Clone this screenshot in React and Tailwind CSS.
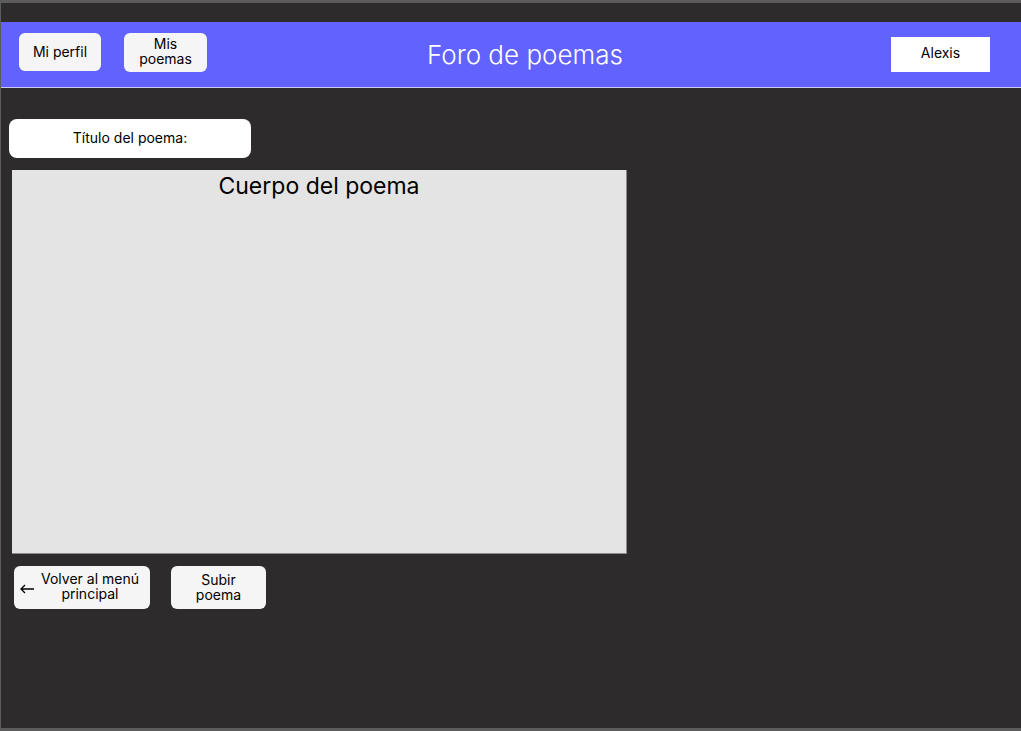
export default function App() {
  return (
    <div
      className="h-[731px] w-[1021px] overflow-hidden border-t-[3px] border-b-[3px] border-l border-[#5c5c5c] bg-[#2d2b2c]"
      style={{ fontFamily: 'Inter, "Liberation Sans", sans-serif' }}
    >
      <div className="h-[19px]" />
      <header className="flex h-[66px] items-start border-b border-[#c9c9ee] bg-[#6262fe] pt-[11px]">
        <button className="ml-[18px] h-[38px] w-[82px] rounded-md bg-[#f5f5f5] text-[14px] leading-[16px] text-black">
          Mi perfil
        </button>
        <button className="ml-[23px] h-[39px] w-[83px] rounded-md bg-[#f5f5f5] pb-[3px] text-[14px] leading-[15px] text-black">
          Mis
          <br />
          poemas
        </button>
        <h1 className="flex-1 pr-[48px] pt-[3px] text-center text-[26px] leading-[38px] font-light text-white">
          Foro de poemas
        </h1>
        <div className="mr-[31px] mt-[4px] flex h-[35px] w-[99px] items-center justify-center bg-white pb-[4px] text-[14px] text-black">
          Alexis
        </div>
      </header>
      <main className="px-[8px] pt-[31px]">
        <div className="flex h-[39px] w-[242px] items-center justify-center rounded-lg bg-white pb-[2px] text-[14px] text-black">
          Título del poema:
        </div>
        <div className="ml-[3px] mt-[12px] h-[384px] w-[615px] border-r border-b border-[#8a8a8a] bg-[#e4e4e4] pt-[2px] text-center text-[23px] leading-[28px] text-black">
          Cuerpo del poema
        </div>
        <div className="ml-[5px] mt-[12px] flex gap-[21px]">
          <button className="flex h-[43px] w-[136px] items-center justify-start gap-[6px] rounded-md bg-[#f5f5f5] pb-[3px] pl-[5px] text-[14px] leading-[15px] text-black">
            <svg width="16" height="12" viewBox="0 0 16 12" fill="none" stroke="black" strokeWidth="1.3" className="mt-[4px]">
              <path d="M15 7H2M6 3L2 7l4 4" />
            </svg>
            <span className="text-center">
              Volver al menú
              <br />
              principal
            </span>
          </button>
          <button className="h-[43px] w-[95px] rounded-md bg-[#f5f5f5] pb-[2px] text-[14px] leading-[15px] text-black">
            Subir
            <br />
            poema
          </button>
        </div>
      </main>
    </div>
  );
}
